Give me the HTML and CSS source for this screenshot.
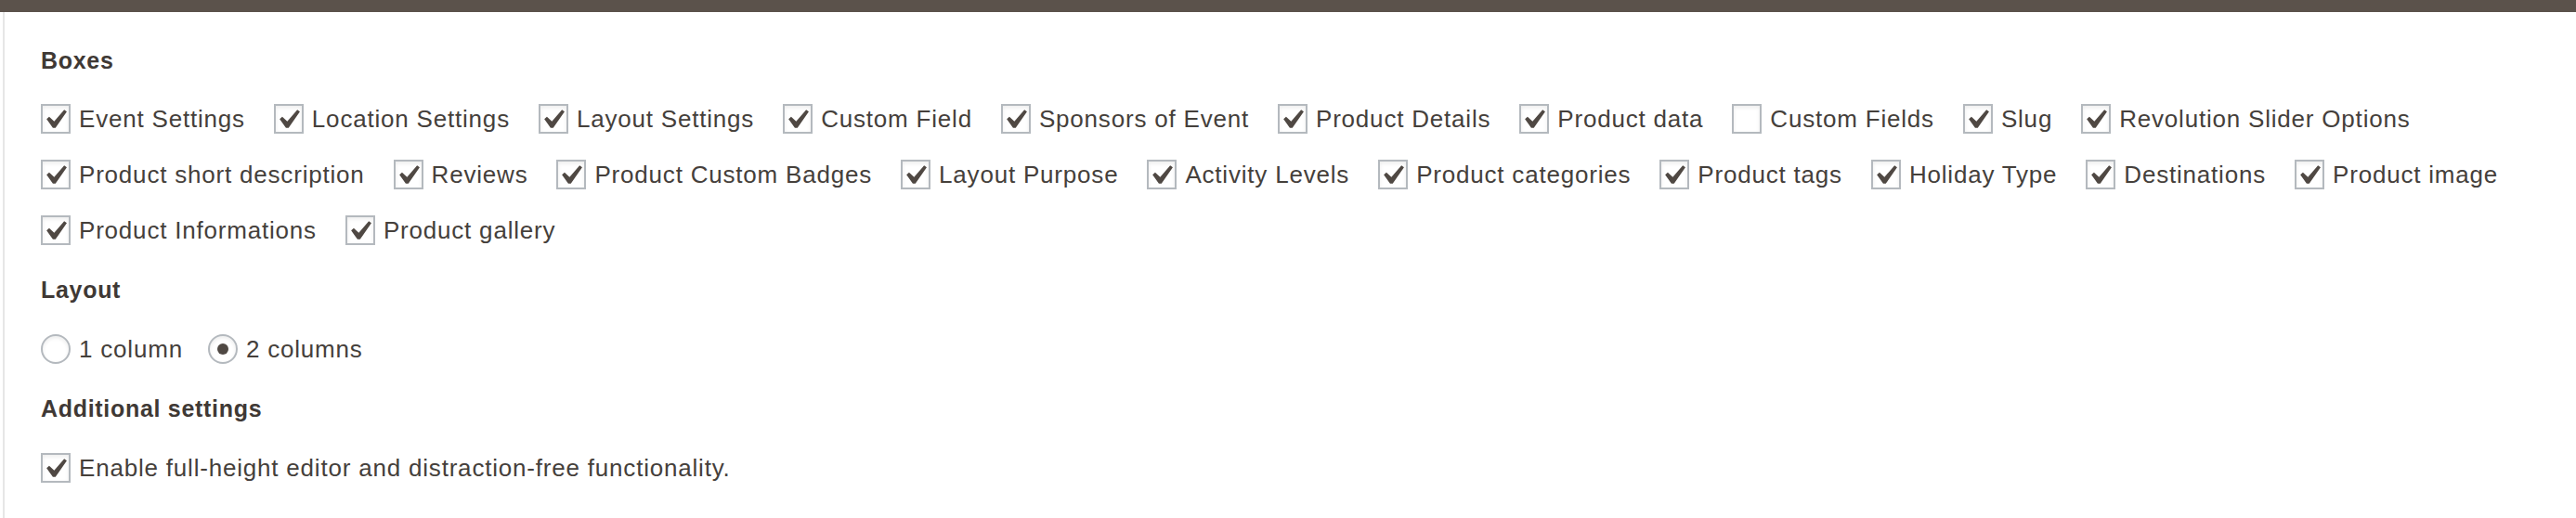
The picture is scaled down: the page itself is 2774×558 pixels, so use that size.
FILE: index.html
```html
<!DOCTYPE html>
<html lang="en">
<head>
<meta charset="utf-8">
<title>Screen Options</title>
<link rel="stylesheet" href="styles.css">
</head>
<body>
<div class="topbar"></div>
<div class="panel">
  <div class="group">
    <h5 class="heading">Boxes</h5>
    <div class="options">
      <label class="opt"><span class="box"><svg class="tick" viewBox="0 0 28 28"><path transform="translate(-8 -6) scale(2.1)" d="M14.83 4.89l1.34.94-5.81 8.38H9.02L5.78 9.67l1.34-1.25 2.57 2.4z"/></svg></span><span class="txt">Event Settings</span></label>
      <label class="opt"><span class="box"><svg class="tick" viewBox="0 0 28 28"><path transform="translate(-8 -6) scale(2.1)" d="M14.83 4.89l1.34.94-5.81 8.38H9.02L5.78 9.67l1.34-1.25 2.57 2.4z"/></svg></span><span class="txt">Location Settings</span></label>
      <label class="opt"><span class="box"><svg class="tick" viewBox="0 0 28 28"><path transform="translate(-8 -6) scale(2.1)" d="M14.83 4.89l1.34.94-5.81 8.38H9.02L5.78 9.67l1.34-1.25 2.57 2.4z"/></svg></span><span class="txt">Layout Settings</span></label>
      <label class="opt"><span class="box"><svg class="tick" viewBox="0 0 28 28"><path transform="translate(-8 -6) scale(2.1)" d="M14.83 4.89l1.34.94-5.81 8.38H9.02L5.78 9.67l1.34-1.25 2.57 2.4z"/></svg></span><span class="txt">Custom Field</span></label>
      <label class="opt"><span class="box"><svg class="tick" viewBox="0 0 28 28"><path transform="translate(-8 -6) scale(2.1)" d="M14.83 4.89l1.34.94-5.81 8.38H9.02L5.78 9.67l1.34-1.25 2.57 2.4z"/></svg></span><span class="txt">Sponsors of Event</span></label>
      <label class="opt"><span class="box"><svg class="tick" viewBox="0 0 28 28"><path transform="translate(-8 -6) scale(2.1)" d="M14.83 4.89l1.34.94-5.81 8.38H9.02L5.78 9.67l1.34-1.25 2.57 2.4z"/></svg></span><span class="txt">Product Details</span></label>
      <label class="opt"><span class="box"><svg class="tick" viewBox="0 0 28 28"><path transform="translate(-8 -6) scale(2.1)" d="M14.83 4.89l1.34.94-5.81 8.38H9.02L5.78 9.67l1.34-1.25 2.57 2.4z"/></svg></span><span class="txt">Product data</span></label>
      <label class="opt"><span class="box"></span><span class="txt">Custom Fields</span></label>
      <label class="opt"><span class="box"><svg class="tick" viewBox="0 0 28 28"><path transform="translate(-8 -6) scale(2.1)" d="M14.83 4.89l1.34.94-5.81 8.38H9.02L5.78 9.67l1.34-1.25 2.57 2.4z"/></svg></span><span class="txt">Slug</span></label>
      <label class="opt"><span class="box"><svg class="tick" viewBox="0 0 28 28"><path transform="translate(-8 -6) scale(2.1)" d="M14.83 4.89l1.34.94-5.81 8.38H9.02L5.78 9.67l1.34-1.25 2.57 2.4z"/></svg></span><span class="txt">Revolution Slider Options</span></label>
      <label class="opt"><span class="box"><svg class="tick" viewBox="0 0 28 28"><path transform="translate(-8 -6) scale(2.1)" d="M14.83 4.89l1.34.94-5.81 8.38H9.02L5.78 9.67l1.34-1.25 2.57 2.4z"/></svg></span><span class="txt">Product short description</span></label>
      <label class="opt"><span class="box"><svg class="tick" viewBox="0 0 28 28"><path transform="translate(-8 -6) scale(2.1)" d="M14.83 4.89l1.34.94-5.81 8.38H9.02L5.78 9.67l1.34-1.25 2.57 2.4z"/></svg></span><span class="txt">Reviews</span></label>
      <label class="opt"><span class="box"><svg class="tick" viewBox="0 0 28 28"><path transform="translate(-8 -6) scale(2.1)" d="M14.83 4.89l1.34.94-5.81 8.38H9.02L5.78 9.67l1.34-1.25 2.57 2.4z"/></svg></span><span class="txt">Product Custom Badges</span></label>
      <label class="opt"><span class="box"><svg class="tick" viewBox="0 0 28 28"><path transform="translate(-8 -6) scale(2.1)" d="M14.83 4.89l1.34.94-5.81 8.38H9.02L5.78 9.67l1.34-1.25 2.57 2.4z"/></svg></span><span class="txt">Layout Purpose</span></label>
      <label class="opt"><span class="box"><svg class="tick" viewBox="0 0 28 28"><path transform="translate(-8 -6) scale(2.1)" d="M14.83 4.89l1.34.94-5.81 8.38H9.02L5.78 9.67l1.34-1.25 2.57 2.4z"/></svg></span><span class="txt">Activity Levels</span></label>
      <label class="opt"><span class="box"><svg class="tick" viewBox="0 0 28 28"><path transform="translate(-8 -6) scale(2.1)" d="M14.83 4.89l1.34.94-5.81 8.38H9.02L5.78 9.67l1.34-1.25 2.57 2.4z"/></svg></span><span class="txt">Product categories</span></label>
      <label class="opt"><span class="box"><svg class="tick" viewBox="0 0 28 28"><path transform="translate(-8 -6) scale(2.1)" d="M14.83 4.89l1.34.94-5.81 8.38H9.02L5.78 9.67l1.34-1.25 2.57 2.4z"/></svg></span><span class="txt">Product tags</span></label>
      <label class="opt"><span class="box"><svg class="tick" viewBox="0 0 28 28"><path transform="translate(-8 -6) scale(2.1)" d="M14.83 4.89l1.34.94-5.81 8.38H9.02L5.78 9.67l1.34-1.25 2.57 2.4z"/></svg></span><span class="txt">Holiday Type</span></label>
      <label class="opt"><span class="box"><svg class="tick" viewBox="0 0 28 28"><path transform="translate(-8 -6) scale(2.1)" d="M14.83 4.89l1.34.94-5.81 8.38H9.02L5.78 9.67l1.34-1.25 2.57 2.4z"/></svg></span><span class="txt">Destinations</span></label>
      <label class="opt"><span class="box"><svg class="tick" viewBox="0 0 28 28"><path transform="translate(-8 -6) scale(2.1)" d="M14.83 4.89l1.34.94-5.81 8.38H9.02L5.78 9.67l1.34-1.25 2.57 2.4z"/></svg></span><span class="txt">Product image</span></label>
      <label class="opt"><span class="box"><svg class="tick" viewBox="0 0 28 28"><path transform="translate(-8 -6) scale(2.1)" d="M14.83 4.89l1.34.94-5.81 8.38H9.02L5.78 9.67l1.34-1.25 2.57 2.4z"/></svg></span><span class="txt">Product Informations</span></label>
      <label class="opt"><span class="box"><svg class="tick" viewBox="0 0 28 28"><path transform="translate(-8 -6) scale(2.1)" d="M14.83 4.89l1.34.94-5.81 8.38H9.02L5.78 9.67l1.34-1.25 2.57 2.4z"/></svg></span><span class="txt">Product gallery</span></label>
    </div>
  </div>
  <div class="group">
    <h5 class="heading">Layout</h5>
    <div class="options radios">
      <label class="opt"><span class="radio"></span><span class="txt">1 column</span></label>
      <label class="opt"><span class="radio on"></span><span class="txt">2 columns</span></label>
    </div>
  </div>
  <div class="group">
    <h5 class="heading">Additional settings</h5>
    <div class="options">
      <label class="opt"><span class="box"><svg class="tick" viewBox="0 0 28 28"><path transform="translate(-8 -6) scale(2.1)" d="M14.83 4.89l1.34.94-5.81 8.38H9.02L5.78 9.67l1.34-1.25 2.57 2.4z"/></svg></span><span class="txt">Enable full-height editor and distraction-free functionality.</span></label>
    </div>
  </div>
</div>
</body>
</html>
```

FILE: styles.css
```css
html, body {
  margin: 0;
  padding: 0;
  background: #ffffff;
}

body {
  font-family: "Liberation Sans", Arial, sans-serif;
  color: #45403b;
}

.topbar {
  height: 13px;
  background: #5b524b;
}

.panel {
  box-sizing: border-box;
  min-height: 545px;
  margin-left: 3px;
  border-left: 2px solid #e6e6e6;
  padding: 32px 20px 20px 39px;
}

.group + .group {
  margin-top: 14px;
}

.heading {
  margin: 0;
  font-size: 25px;
  line-height: 40px;
  font-weight: bold;
  letter-spacing: 0.7px;
  color: #3f3935;
}

.options {
  display: flex;
  flex-wrap: wrap;
  column-gap: 31px;
  margin-top: 13px;
}

.group + .group .options {
  margin-top: 14px;
}

.options.radios {
  column-gap: 27px;
}

.opt {
  display: inline-flex;
  align-items: center;
  gap: 9px;
  height: 60px;
  font-size: 26px;
  letter-spacing: 0.8px;
  white-space: nowrap;
}

.box {
  flex: none;
  box-sizing: border-box;
  width: 32px;
  height: 32px;
  border: 2px solid #b4b9be;
  background: #ffffff;
  box-shadow: inset 0 2px 4px rgba(0, 0, 0, 0.08);
}

.tick {
  display: block;
  width: 28px;
  height: 28px;
  fill: #4f4843;
}

.radio {
  flex: none;
  box-sizing: border-box;
  width: 32px;
  height: 32px;
  border: 2px solid #b4b9be;
  border-radius: 50%;
  background: #ffffff;
  box-shadow: inset 0 2px 4px rgba(0, 0, 0, 0.08);
  display: flex;
  align-items: center;
  justify-content: center;
}

.radio.on::before {
  content: "";
  width: 12px;
  height: 12px;
  border-radius: 50%;
  background: #4f4843;
}
```
